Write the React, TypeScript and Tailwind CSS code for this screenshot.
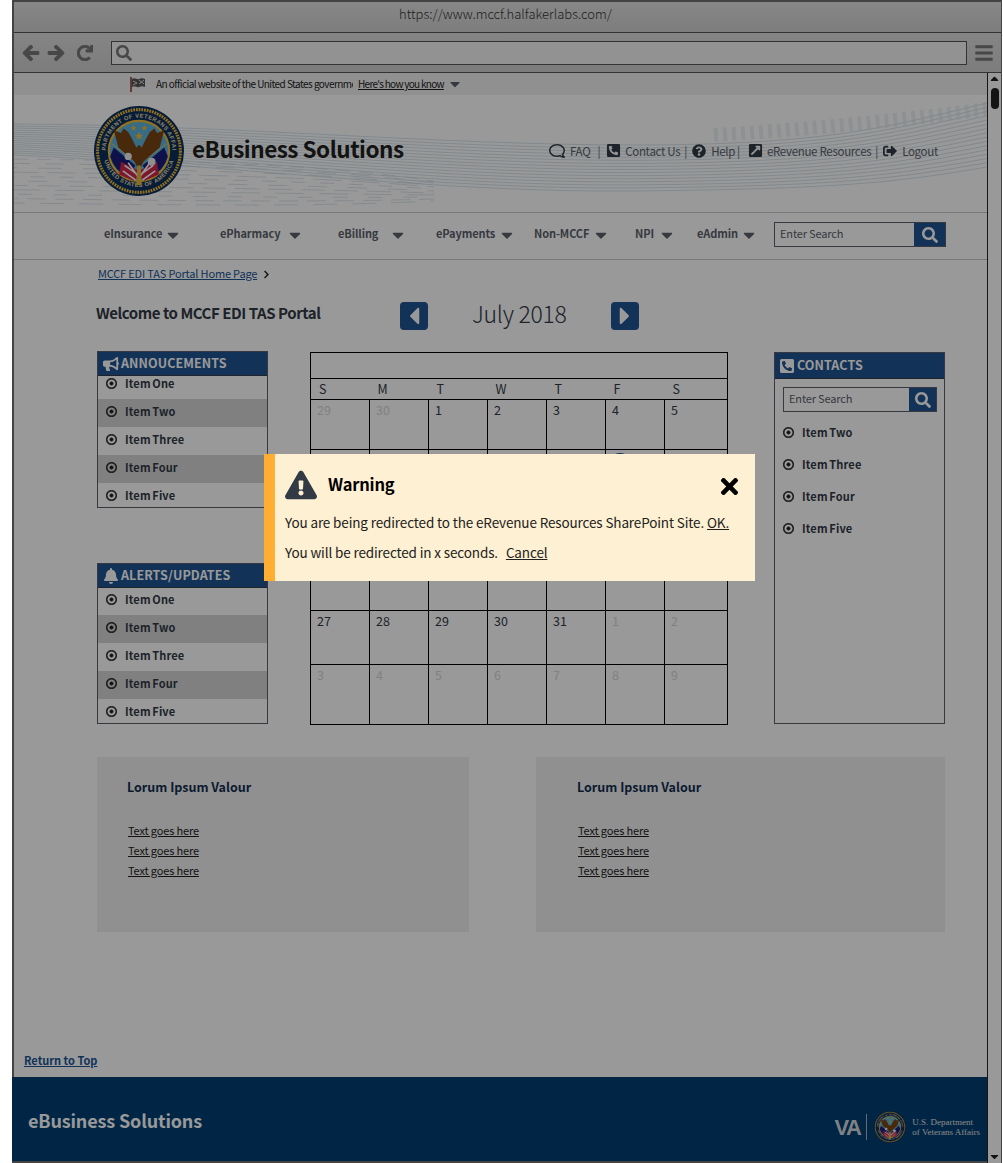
import { useMemo } from 'react';
import {
  FaArrowLeft,
  FaArrowRight,
  FaBars,
  FaBell,
  FaBullhorn,
  FaCaretDown,
  FaCaretLeft,
  FaCaretRight,
  FaCaretUp,
  FaChevronRight,
  FaExclamationTriangle,
  FaExternalLinkSquareAlt,
  FaPhoneSquareAlt,
  FaQuestionCircle,
  FaRedo,
  FaRegComment,
  FaRegDotCircle,
  FaSearch,
  FaSignOutAlt,
  FaTimes,
} from 'react-icons/fa';

const NAV_ITEMS = [
  { label: 'eInsurance', width: 'w-[116px]', gap: 'ml-[2px]' },
  { label: 'ePharmacy', width: 'w-[118px]', gap: 'ml-[6px]' },
  { label: 'eBilling', width: 'w-[98px]', gap: 'ml-[11px]' },
  { label: 'ePayments', width: 'w-[98px]', gap: 'ml-[3px]' },
  { label: 'Non-MCCF', width: 'w-[101px]', gap: 'ml-[3px]' },
  { label: 'NPI', width: 'w-[62px]', gap: 'ml-[4px]' },
  { label: 'eAdmin', width: 'w-[77px]', gap: 'ml-[2px]' },
];

const WEEKS = [
  [29, 30, 1, 2, 3, 4, 5],
  [6, 7, 8, 9, 10, 11, 12],
  [13, 14, 15, 16, 17, 18, 19],
  [20, 21, 22, 23, 24, 25, 26],
  [27, 28, 29, 30, 31, 1, 2],
  [3, 4, 5, 6, 7, 8, 9],
];
const WEEK_HEIGHTS = ['h-[50px]', 'h-[54px]', 'h-[54px]', 'h-[53px]', 'h-[54px]', 'h-[60px]'];

function isOutside(week: number, day: number) {
  return (week === 0 && day > 20) || (week === 4 && day < 10) || week === 5;
}

function Waves() {
  const lines = useMemo(() => {
    const out: string[] = [];
    for (let i = 0; i < 16; i++) {
      const t = i / 15;
      const mix = (a: number, b: number) => (a + (b - a) * t).toFixed(1);
      out.push(
        `M0 ${mix(29, 60)} C 220 ${mix(30, 70)}, 420 ${mix(50, 98)}, 620 ${mix(50, 96)} S 880 ${mix(30, 88)}, 973 ${mix(8, 72)}`,
      );
    }
    return out;
  }, []);
  const lower = useMemo(() => {
    const out: { d: string; offset: number; dash: string }[] = [];
    for (let i = 0; i < 11; i++) {
      const y = 64 + i * 4.4;
      out.push({
        d: `M0 ${y} C 160 ${y + 2}, 300 ${y + 4}, 420 ${86 + i * 2}`,
        offset: (i * 37) % 53,
        dash: `${14 + (i % 4) * 5} ${9 + (i % 3) * 6}`,
      });
    }
    return out;
  }, []);
  return (
    <svg className="absolute inset-0 h-full w-full" viewBox="0 0 973 117" preserveAspectRatio="none">
      {lines.map(d => (
        <path key={d} d={d} fill="none" stroke="#a9c6d8" strokeWidth="0.6" opacity="0.8" />
      ))}
      <path d="M700 40 C 800 34, 900 24, 973 14" fill="none" stroke="#dbe5ec" strokeWidth="14" strokeDasharray="4 5" opacity="0.5" />
      {lower.map(l => (
        <path
          key={l.d}
          d={l.d}
          fill="none"
          stroke="#c3d2de"
          strokeWidth="0.7"
          strokeDasharray={l.dash}
          strokeDashoffset={l.offset}
          opacity="0.8"
        />
      ))}
    </svg>
  );
}

function Seal({ className }: { className?: string }) {
  return (
    <svg className={className} viewBox="0 0 100 100">
      <defs>
        <path id="seal-top" d="M13 50 A37 37 0 0 1 87 50" />
        <path id="seal-bottom" d="M10 50 A40 40 0 0 0 90 50" />
      </defs>
      <circle cx="50" cy="50" r="50" fill="#0b2f5c" />
      <circle cx="50" cy="50" r="46" fill="none" stroke="#f0bb3a" strokeWidth="3.4" strokeDasharray="2 1" />
      <circle cx="50" cy="50" r="43" fill="#0b2f5c" />
      <text className="font-['Liberation_Sans',sans-serif]" fontSize="6.4" fontWeight="700" fill="#e8dcb4" letterSpacing="0.5">
        <textPath href="#seal-top" startOffset="50%" textAnchor="middle">
          DEPARTMENT OF VETERANS AFFAIRS
        </textPath>
      </text>
      <text className="font-['Liberation_Sans',sans-serif]" fontSize="6.4" fontWeight="700" fill="#e8dcb4" letterSpacing="0.5">
        <textPath href="#seal-bottom" startOffset="50%" textAnchor="middle">
          UNITED STATES OF AMERICA
        </textPath>
      </text>
      <circle cx="50" cy="50" r="33.5" fill="#5cb5dd" stroke="#f0bb3a" strokeWidth="2.4" />
      <path d="M22 46 L46 66 L38 78 A32 32 0 0 1 18 56 Z" fill="#1a1d7c" />
      <path d="M78 46 L54 66 L62 78 A32 32 0 0 0 82 56 Z" fill="#1a1d7c" />
      <path d="M30 62 L50 72 L70 62 L72 76 L56 83 L50 78 L44 83 L28 76 Z" fill="#d3264c" />
      <path d="M34 66 L48 76 M38 63 L50 80 M66 66 L52 76 M62 63 L50 80 M32 72 L46 82 M68 72 L54 82" stroke="#fff" strokeWidth="1.8" />
      <path d="M20 42 L46 62 M80 42 L54 62" stroke="#e4c56a" strokeWidth="1" />
      <path
        d="M50 72 L45 62 L36 54 L27 46 L22 27 L30 30 L33 25 L38 29 L42 36 L47 46 L50 43 L53 46 L58 36 L62 29 L67 25 L70 30 L78 27 L73 46 L64 54 L55 62 Z"
        fill="#7a4513"
      />
      <circle cx="38" cy="56" r="4" fill="#efefef" />
      <circle cx="64" cy="62" r="4.4" fill="#efefef" />
      <path d="M48 66 L52 66 L53 88 L47 88 Z" fill="#e3b73f" />
      <path d="M50 29 l1.5 3 3 .4 -2.3 2 .6 3 -2.8 -1.6 -2.8 1.6 .6 -3 -2.3 -2 3 -.4 Z" fill="#f0bb3a" />
      <path d="M44 21 l1 2.2 2.2 .3 -1.6 1.5 .4 2.2 -2 -1.1 -2 1.1 .4 -2.2 -1.6 -1.5 2.2 -.3 Z" fill="#f0bb3a" />
      <path d="M56 21 l1 2.2 2.2 .3 -1.6 1.5 .4 2.2 -2 -1.1 -2 1.1 .4 -2.2 -1.6 -1.5 2.2 -.3 Z" fill="#f0bb3a" />
    </svg>
  );
}

function NavSearch() {
  return (
    <div className="flex h-[25px] w-[172px] border border-[#5b616b] bg-white">
      <span className="flex-1 pl-[5px] text-[11px] leading-[21px] tracking-[-0.15px] text-[#5b616b]">Enter Search</span>
      <span className="flex w-[31px] items-center justify-center bg-[#205493]">
        <FaSearch className="text-[16px] text-white" />
      </span>
    </div>
  );
}

function ItemLabel({ label }: { label: string }) {
  return (
    <>
      <FaRegDotCircle className="text-[11px] text-[#212121] stroke-[24px]" />
      <span className="mb-px text-[11px] leading-[16px] font-bold tracking-[0.15px] [word-spacing:-1px] text-[#323a45]">{label}</span>
    </>
  );
}

function PanelRow({ label, height, pad, shaded }: { label: string; height: string; pad: string; shaded?: boolean }) {
  return (
    <div className={`flex items-center gap-[8px] pl-[8px] ${height} ${pad} ${shaded ? 'bg-[#d6d6d6]' : ''}`}>
      <ItemLabel label={label} />
    </div>
  );
}

function PanelHeader({ icon, title, height }: { icon: React.ReactNode; title: string; height: string }) {
  return (
    <div className={`flex items-center gap-[2px] bg-[#205493] pl-[5px] text-white ${height}`}>
      {icon}
      <span className="mb-px text-[12.5px] leading-[16px] font-bold tracking-[0.1px]">{title}</span>
    </div>
  );
}

function LinkCard({ className }: { className: string }) {
  return (
    <section className={`h-[175px] bg-[#f1f1f1] pt-[21px] ${className}`}>
      <h3 className="text-[12.5px] leading-[18px] font-bold text-[#112e51]">Lorum Ipsum Valour</h3>
      <ul className="mt-[24px] ml-px">
        {[0, 1, 2].map(i => (
          <li key={i} className="h-[20px] text-[11px] leading-[20px] tracking-[-0.15px] text-[#212121] underline">
            Text goes here
          </li>
        ))}
      </ul>
    </section>
  );
}

export default function App() {
  return (
    <div className="relative h-[1163px] w-[1003px] overflow-hidden bg-white font-['Noto_Sans_CJK_SC',sans-serif] text-[#212121]">
      <div className="ml-[12px] flex h-full w-[990px] flex-col border-x-2 border-t-2 border-x-[#707070] border-t-[#707070] border-r-[1px]">
        {/* browser chrome */}
        <div className="h-[31px] shrink-0 border-b border-[#555] bg-gradient-to-b from-[#e2e2e2] to-[#d0d0d0] pr-[4px] text-center text-[13px] leading-[24px] font-light text-[#333]">
          https://www.mccf.halfakerlabs.com/
        </div>
        <div className="flex h-[40px] shrink-0 items-center border-b border-[#555] bg-gradient-to-b from-[#dedede] to-[#cfcfcf] pl-[8px]">
          <FaArrowLeft className="stroke-[30px] text-[18px] text-[#777]" />
          <FaArrowRight className="ml-[7px] stroke-[30px] text-[18px] text-[#777]" />
          <FaRedo className="ml-[12px] stroke-[30px] text-[16px] text-[#777]" />
          <div className="ml-[18px] flex h-[24px] w-[856px] items-center border border-[#555] bg-[#f4f4f4] pl-[4px]">
            <FaSearch className="text-[16px] text-[#777]" />
          </div>
          <FaBars className="ml-[7px] text-[20px] text-[#777]" />
        </div>

        <div className="flex min-h-0 flex-1">
          <main className="flex w-[973px] flex-col">
            <div className="flex h-[22px] shrink-0 items-center bg-[#f1f1f1] pl-[116px] text-[10px] leading-[14px]">
              <svg className="h-[15px] w-[17px]" viewBox="0 0 17 15">
                <path d="M1 0v15" stroke="#8c2a20" strokeWidth="1.5" />
                <path d="M2 2c3-2 5 1 7 0s4-1 6 0v8c-2-1-4-1-6 0s-4-2-7 0Z" fill="#555" />
                <path d="M3 4l4 2-4 2M9 3l5 4M14 3L9 7" stroke="#ddd" strokeWidth="1" fill="none" />
              </svg>
              <span className="ml-[9px] w-[197px] overflow-hidden tracking-[-0.55px] whitespace-nowrap text-[#212121]">
                An official website of the United States government
              </span>
              <span className="ml-[5px] tracking-[-0.7px] whitespace-nowrap text-[#212121] underline">Here's how you know</span>
              <FaCaretDown className="ml-[3px] text-[16px] text-[#5b616b]" />
            </div>

            <header className="relative flex h-[117px] shrink-0 items-center overflow-hidden bg-white pr-[49px]">
              <Waves />
              <Seal className="relative mb-[5px] ml-[80px] h-[90px] w-[90px] shrink-0" />
              <h1 className="relative mb-[12px] ml-[8px] text-[22.5px] leading-[30px] font-semibold tracking-[-0.5px] whitespace-nowrap text-[#212121]">
                eBusiness Solutions
              </h1>
              <div className="relative mb-[6px] ml-auto flex items-center text-[11.5px] leading-[16px] tracking-[-0.3px] whitespace-nowrap text-[#5b616b]">
                <FaRegComment className="text-[16px] text-[#323a45] [transform:scaleX(-1)]" />
                <span className="ml-[5px]">FAQ</span>
                <span className="ml-[7px]">|</span>
                <FaPhoneSquareAlt className="ml-[6px] text-[15px] text-[#323a45]" />
                <span className="ml-[4px]">Contact Us</span>
                <span className="ml-[4px]">|</span>
                <FaQuestionCircle className="ml-[5px] text-[14px] text-[#323a45]" />
                <span className="ml-[5px]">Help</span>
                <span className="ml-[2px]">|</span>
                <FaExternalLinkSquareAlt className="ml-[8px] text-[15px] text-[#323a45]" />
                <span className="ml-[4px]">eRevenue Resources</span>
                <span className="ml-[4px]">|</span>
                <FaSignOutAlt className="ml-[5px] text-[14px] text-[#323a45]" />
                <span className="ml-[5px]">Logout</span>
              </div>
            </header>

            <nav className="flex h-[48px] shrink-0 items-center border-y border-[#c8c8c8] bg-white pb-[3px] pl-[90px]">
              {NAV_ITEMS.map(item => (
                <div key={item.label} className={`flex items-center ${item.width}`}>
                  <span className="mb-[2px] text-[11px] font-semibold tracking-[-0.1px] text-[#5b616b]">{item.label}</span>
                  <FaCaretDown className={`text-[18px] text-[#5b616b] ${item.gap}`} />
                </div>
              ))}
              <NavSearch />
            </nav>

            <div className="flex h-[28px] shrink-0 items-center pb-px pl-[84px] text-[11px] tracking-[-0.17px]">
              <span className="text-[#205493] underline">MCCF EDI TAS Portal Home Page</span>
              <FaChevronRight className="mt-px ml-[5px] text-[9px] text-[#212121]" />
            </div>

            <div className="mt-[14px] flex h-[28px] shrink-0 items-center pl-[82px]">
              <h2 className="mb-[5px] w-[304px] text-[15px] font-semibold tracking-[-0.45px] text-[#323a45]">Welcome to MCCF EDI TAS Portal</h2>
              <span className="flex h-[28px] w-[28px] items-center justify-center rounded-[4px] bg-[#205493]">
                <FaCaretLeft className="text-[28px] text-white" />
              </span>
              <span className="mb-[7px] ml-[44px] w-[139px] text-[23px] leading-[28px] font-light tracking-[-0.3px] text-[#323a45]">July 2018</span>
              <span className="flex h-[28px] w-[28px] items-center justify-center rounded-[4px] bg-[#205493]">
                <FaCaretRight className="text-[28px] text-white" />
              </span>
            </div>

            <div className="mt-[21px] flex h-[373px] shrink-0 pl-[83px]">
              <div className="flex w-[171px] flex-col justify-between">
                <div className="h-[157px] border border-[#5b616b]">
                  <PanelHeader
                    height="h-[23px]"
                    title="ANNOUCEMENTS"
                    icon={<FaBullhorn className="text-[16px] text-white" />}
                  />
                  <div className="border-t border-[#323a45]">
                    <PanelRow label="Item One" height="h-[23px]" pad="pb-[8px]" />
                    <PanelRow label="Item Two" height="h-[28px]" pad="pb-[4px]" shaded />
                    <PanelRow label="Item Three" height="h-[28px]" pad="pb-[4px]" />
                    <PanelRow label="Item Four" height="h-[28px]" pad="pb-[4px]" shaded />
                    <PanelRow label="Item Five" height="h-[24px]" pad="" />
                  </div>
                </div>
                <div className="h-[161px] border border-[#5b616b]">
                  <PanelHeader
                    height="h-[23px]"
                    title="ALERTS/UPDATES"
                    icon={<FaBell className="text-[16px] text-white" />}
                  />
                  <div className="border-t border-[#323a45]">
                    <PanelRow label="Item One" height="h-[27px]" pad="pb-[4px]" />
                    <PanelRow label="Item Two" height="h-[28px]" pad="pb-[4px]" shaded />
                    <PanelRow label="Item Three" height="h-[28px]" pad="pb-[4px]" />
                    <PanelRow label="Item Four" height="h-[28px]" pad="pb-[4px]" shaded />
                    <PanelRow label="Item Five" height="h-[25px]" pad="" />
                  </div>
                </div>
              </div>

              <table className="mt-px ml-[42px] h-[371px] w-[417px] table-fixed border-collapse border border-black text-[12.5px] text-[#323a45]">
                <colgroup>
                  {[0, 1, 2, 3, 4, 5].map(i => (
                    <col key={i} className="w-[59px]" />
                  ))}
                  <col className="w-[63px]" />
                </colgroup>
                <tbody>
                  <tr className="h-[26px] border-b border-black">
                    <td colSpan={7} />
                  </tr>
                  <tr className="h-[20px] border-b border-black">
                    {['S', 'M', 'T', 'W', 'T', 'F', 'S'].map((d, i) => (
                      <td key={i} className="pl-[8px] align-bottom leading-[20px]">
                        {d}
                      </td>
                    ))}
                  </tr>
                  {WEEKS.map((week, w) => (
                    <tr key={w} className={WEEK_HEIGHTS[w]}>
                      {week.map((day, d) => (
                        <td
                          key={d}
                          className={`border border-black pl-[6px] align-top leading-[20px] ${isOutside(w, day) ? 'text-[#d6d7d9]' : ''}`}
                        >
                          {w === 1 && d === 5 ? (
                            <span className="mt-[3px] -ml-[3px] flex h-[22px] w-[22px] items-center justify-center rounded-full bg-[#205493] text-white">
                              {day}
                            </span>
                          ) : (
                            day
                          )}
                        </td>
                      ))}
                    </tr>
                  ))}
                </tbody>
              </table>

              <aside className="mt-px ml-[46px] h-[372px] w-[171px] border border-[#5b616b]">
                <PanelHeader
                  height="h-[25px]"
                  title="CONTACTS"
                  icon={<FaPhoneSquareAlt className="-ml-px text-[16px] text-white" />}
                />
                <div className="border-t border-[#323a45] pt-[8px] pl-[8px]">
                  <div className="flex h-[25px] w-[154px] border border-[#5b616b]">
                    <span className="flex-1 pl-[5px] text-[11px] leading-[21px] tracking-[-0.15px] text-[#5b616b]">Enter Search</span>
                    <span className="flex w-[27px] items-center justify-center bg-[#205493]">
                      <FaSearch className="text-[16px] text-white" />
                    </span>
                  </div>
                  <ul className="mt-[4px]">
                    {['Item Two', 'Item Three', 'Item Four', 'Item Five'].map(item => (
                      <li key={item} className="flex h-[32px] items-center gap-[8px]">
                        <ItemLabel label={item} />
                      </li>
                    ))}
                  </ul>
                </div>
              </aside>
            </div>

            <div className="mt-[33px] flex shrink-0 pl-[83px]">
              <LinkCard className="w-[372px] pl-[30px]" />
              <LinkCard className="ml-[67px] w-[409px] pl-[41px]" />
            </div>

            <div className="flex flex-1 items-end pb-[9px] pl-[10px]">
              <span className="text-[11px] leading-[16px] font-bold text-[#205493] underline">Return to Top</span>
            </div>

            <footer className="-ml-[2px] flex h-[84px] w-[975px] shrink-0 items-center bg-[#003e73] pr-[7px] pl-[16px]">
              <span className="mt-[3px] text-[18px] font-semibold tracking-[-0.15px] text-white">eBusiness Solutions</span>
              <div className="mt-[16px] ml-auto flex items-center">
                <span className="font-['Liberation_Sans',sans-serif] text-[22px] font-bold tracking-[-1.5px] text-[#d6d7d9]">VA</span>
                <span className="mr-[7px] ml-[6px] h-[26px] w-px bg-[#aeb0b5]" />
                <Seal className="h-[32px] w-[32px]" />
                <span className="ml-[6px] font-['Liberation_Serif',serif] text-[9px] leading-[10px] text-[#e4e2e0]">
                  U.S. Department
                  <br />
                  of Veterans Affairs
                </span>
              </div>
            </footer>
            <div className="-ml-[2px] h-[2px] w-[975px] shrink-0 bg-[#707070]" />
          </main>

          <div className="flex w-[14px] flex-col items-center border-l border-[#222] bg-white">
            <FaCaretUp className="mt-[-1px] text-[13px] text-[#222]" />
            <span className="mt-[3px] h-[21px] w-[8px] rounded-full bg-[#222]" />
            <FaCaretDown className="mt-auto text-[13px] text-[#222]" />
          </div>
        </div>
      </div>

      {/* dim layer and warning dialog sit over the page */}
      <div className="absolute inset-y-0 right-px left-[12px] bg-black/40" />
      <div className="absolute top-[454px] left-[264px] h-[127px] w-[491px] border-l-[11px] border-l-[#ffae33] bg-[#fef0d2] pt-[15px] pl-[10px] text-black">
        <div className="flex h-[32px] items-center">
          <FaExclamationTriangle className="text-[32px] text-[#323a45]" />
          <span className="mb-[2px] ml-[11px] text-[16.5px] leading-[28px] font-semibold tracking-[-0.2px]">Warning</span>
          <FaTimes className="mt-[3px] mr-[13px] ml-auto text-[25px]" />
        </div>
        <p className="mt-[10px] text-[13.5px] leading-[22px] tracking-[-0.13px] whitespace-nowrap text-[#212121]">
          You are being redirected to the eRevenue Resources SharePoint Site. <span className="underline">OK.</span>
        </p>
        <p className="mt-[8px] text-[13.5px] leading-[22px] tracking-[-0.13px] whitespace-nowrap text-[#212121]">
          You will be redirected in x seconds. <span className="ml-[5px] underline">Cancel</span>
        </p>
      </div>
    </div>
  );
}
